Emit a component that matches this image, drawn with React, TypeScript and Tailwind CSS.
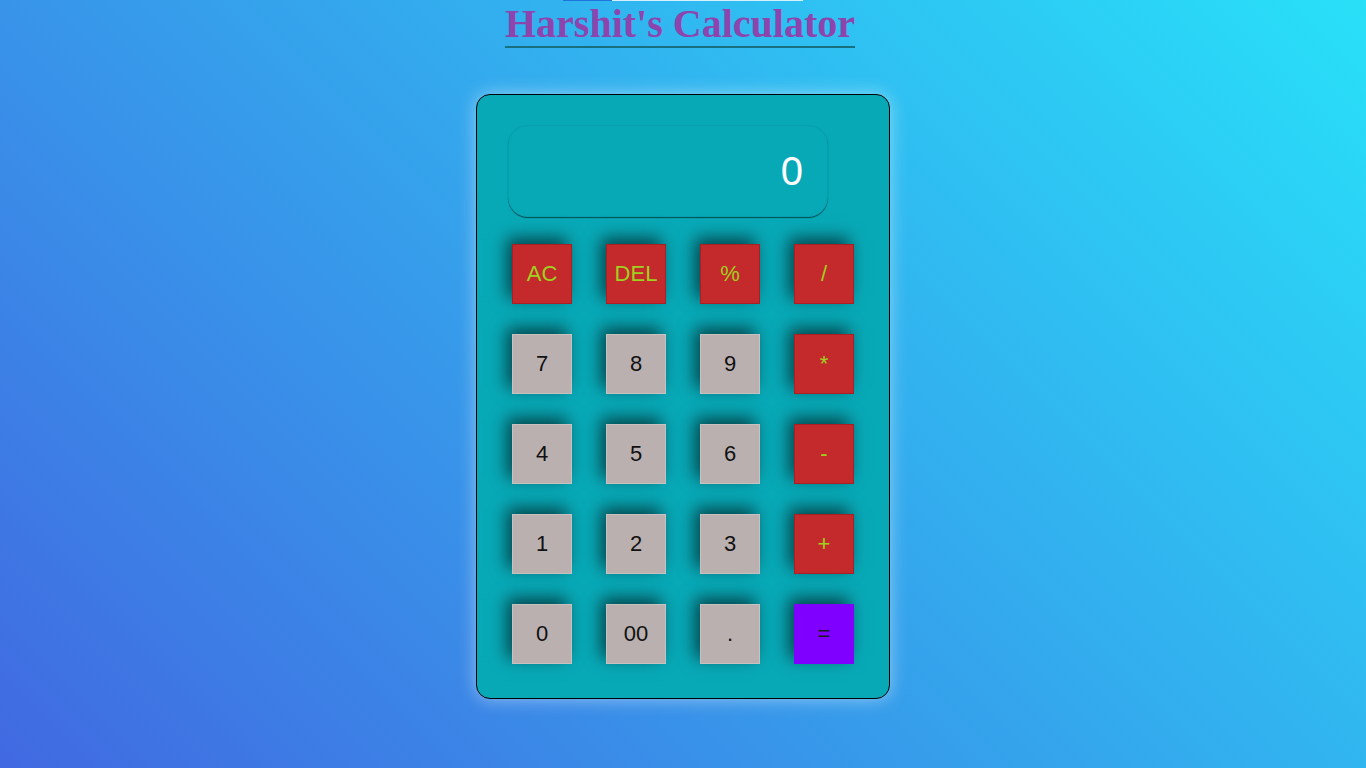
import React from "react";

type Btn = { label: string; kind: "op" | "num" | "eq" };

const rows: Btn[][] = [
  [
    { label: "AC", kind: "op" },
    { label: "DEL", kind: "op" },
    { label: "%", kind: "op" },
    { label: "/", kind: "op" },
  ],
  [
    { label: "7", kind: "num" },
    { label: "8", kind: "num" },
    { label: "9", kind: "num" },
    { label: "*", kind: "op" },
  ],
  [
    { label: "4", kind: "num" },
    { label: "5", kind: "num" },
    { label: "6", kind: "num" },
    { label: "-", kind: "op" },
  ],
  [
    { label: "1", kind: "num" },
    { label: "2", kind: "num" },
    { label: "3", kind: "num" },
    { label: "+", kind: "op" },
  ],
  [
    { label: "0", kind: "num" },
    { label: "00", kind: "num" },
    { label: ".", kind: "num" },
    { label: "=", kind: "eq" },
  ],
];

function Key({ b }: { b: Btn }) {
  const base =
    "w-[60px] h-[60px] flex items-center justify-center text-[22px] leading-none pb-[1px] shadow-[-5px_-6px_16px_rgba(0,0,0,0.6)] border";
  if (b.kind === "op")
    return (
      <button className={base + " bg-[#c4292c] text-[#9ed21f] border-[#a82024]"}>{b.label}</button>
    );
  if (b.kind === "eq")
    return (
      <button className={base + " bg-[#7f00ff] text-[#1a1a1a] border-[#7f00ff]"}>{b.label}</button>
    );
  return (
    <button className={base + " bg-[#bab0b0] text-[#111111] border-[#c9c0c0]"}>{b.label}</button>
  );
}

export default function App() {
  return (
    <div
      className="relative min-h-[768px] w-full flex flex-col items-center bg-[linear-gradient(45deg,#4169e1,#28e0f8)]"
      style={{ fontFamily: "'Liberation Sans', Arial, sans-serif" }}
    >
      <div className="absolute top-0 left-[563px] h-px w-[49px] bg-[#1f73dc]" />
      <div className="absolute top-0 left-[612px] h-px w-[191px] bg-[#d6f1fb]" />
      <h1
        className="m-0 mr-[6px] pt-[1px] text-[40px] leading-[45px] font-bold text-[#8e44ad] border-b-2 border-[#17707f]"
        style={{ fontFamily: "'Liberation Serif', 'Times New Roman', serif" }}
      >
        Harshit's Calculator
      </h1>
      <div className="mt-[46px] w-[414px] h-[605px] rounded-[14px] border border-black bg-[#08a9b7] pt-[30px] px-[31px] shadow-[0_0_18px_rgba(255,255,255,0.45)]">
        <div className="w-[320px] h-[92px] rounded-[20px] border border-black/5 shadow-[0_1px_1px_rgba(0,0,0,0.55)] flex items-center justify-end pr-[24px] text-[40px] text-white">
          0
        </div>
        <div className="ml-[4px] mt-[27px] grid grid-cols-[repeat(4,60px)] gap-x-[34px] gap-y-[30px]">
          {rows.flat().map((b, i) => (
            <Key key={i} b={b} />
          ))}
        </div>
      </div>
    </div>
  );
}
